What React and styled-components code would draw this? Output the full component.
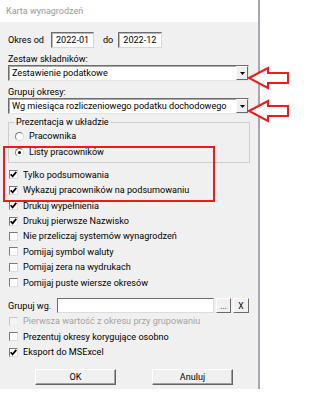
import React from "react";
import styled, { createGlobalStyle } from "styled-components";

const GlobalStyle = createGlobalStyle`
  html, body {
    margin: 0;
    padding: 0;
    background: #ffffff;
  }
  body {
    font-family: Roboto, "Noto Sans", sans-serif;
    font-size: 9.1px;
    color: #000;
  }
`;

const checks = [
  { label: "Tylko podsumowania", checked: true },
  { label: "Wykazuj pracowników na podsumowaniu", checked: true },
  { label: "Drukuj wypełnienia", checked: true },
  { label: "Drukuj pierwsze Nazwisko", checked: true },
  { label: "Nie przeliczaj systemów wynagrodzeń", checked: false },
  { label: "Pomijaj symbol waluty", checked: false },
  { label: "Pomijaj zera na wydrukach", checked: false },
  { label: "Pomijaj puste wiersze okresów", checked: false },
];

const lastChecks = [
  { label: "Pierwsza wartość z okresu przy grupowaniu", checked: false, disabled: true },
  { label: "Prezentuj okresy korygujące osobno", checked: false },
  { label: "Eksport do MSExcel", checked: true },
];

function Check({ label, checked, disabled }) {
  return (
    <CheckRow $disabled={disabled}>
      <CheckBox $disabled={disabled}>
        {checked && (
          <svg width="7" height="7" viewBox="0 0 7 7">
            <path d="M0.6 3.2 L2.6 5.4 L6.3 0.9" fill="none" stroke="#000" strokeWidth="1.7" />
          </svg>
        )}
      </CheckBox>
      <span>{label}</span>
    </CheckRow>
  );
}

function Combo({ value }) {
  return (
    <ComboBox>
      <ComboText>{value}</ComboText>
      <DropButton>
        <svg width="5" height="3" viewBox="0 0 5 3">
          <path d="M0 0 H5 L2.5 3 Z" fill="#000" />
        </svg>
      </DropButton>
    </ComboBox>
  );
}

function Arrow({ top }) {
  return (
    <ArrowSvg style={{ top }} width="46" height="26" viewBox="0 0 46 26">
      <path
        d="M2 12 L21 2 L21 7 L41 7 L41 17 L21 17 L21 22 Z"
        fill="#ffffff"
        stroke="#ee1c1c"
        strokeWidth="2"
        strokeLinejoin="miter"
      />
    </ArrowSvg>
  );
}

export default function App() {
  return (
    <Page>
      <GlobalStyle />
      <Dialog>
        <TitleBar>Karta wynagrodzeń</TitleBar>
        <Body>
          <PeriodRow>
            <PeriodLabel $after={7}>Okres od</PeriodLabel>
            <TextField $width={43} $after={9}>2022-01</TextField>
            <PeriodLabel $after={5}>do</PeriodLabel>
            <TextField $width={44}>2022-12</TextField>
          </PeriodRow>

          <FieldLabel $top={6}>Zestaw składników:</FieldLabel>
          <Combo value="Zestawienie podatkowe" />

          <FieldLabel $top={6}>Grupuj okresy:</FieldLabel>
          <Combo value="Wg miesiąca rozliczeniowego podatku dochodowego" />

          <GroupBox>
            <Legend>Prezentacja w układzie</Legend>
            <RadioRow>
              <Radio />
              <span>Pracownika</span>
            </RadioRow>
            <RadioRow>
              <Radio $selected />
              <span>Listy pracowników</span>
            </RadioRow>
          </GroupBox>

          <CheckList>
            {checks.map((c) => (
              <Check key={c.label} {...c} />
            ))}
          </CheckList>

          <SearchRow>
            <span>Grupuj wg.</span>
            <SearchField />
            <SmallButton $width={15}>...</SmallButton>
            <SmallButton $width={16}>X</SmallButton>
          </SearchRow>

          <CheckList $top={0}>
            {lastChecks.map((c) => (
              <Check key={c.label} {...c} />
            ))}
          </CheckList>

          <ButtonRow>
            <DialogButton>OK</DialogButton>
            <DialogButton>Anuluj</DialogButton>
          </ButtonRow>
        </Body>
      </Dialog>

      <RedFrame />
      <Arrow top={66} />
      <Arrow top={99} />
    </Page>
  );
}

const Page = styled.div`
  position: relative;
  width: 325px;
  height: 401px;
  overflow: hidden;
  background: #ffffff;
`;

const Dialog = styled.div`
  width: 258px;
  height: 389px;
  border-right: 2px solid #aca4b6;
  display: flex;
  flex-direction: column;
  background: #f0f0f0;
`;

const TitleBar = styled.div`
  height: 22px;
  flex: none;
  display: flex;
  align-items: center;
  padding-left: 6px;
  background: #ffffff;
  color: #9a9a9a;
  font-size: 9px;
`;

const Body = styled.div`
  flex: 1;
  display: flex;
  flex-direction: column;
  padding: 10px 9px 0 8px;
`;

const PeriodRow = styled.div`
  display: flex;
  align-items: center;
  height: 16px;
`;

const PeriodLabel = styled.span`
  margin-right: ${(p) => p.$after}px;
`;

const TextField = styled.div`
  box-sizing: border-box;
  width: ${(p) => p.$width}px;
  margin-right: ${(p) => p.$after || 0}px;
  height: 16px;
  padding-left: 4px;
  display: flex;
  align-items: center;
  background: #ffffff;
  border: 1px solid;
  border-color: #6d6d6d #d8d8d8 #d8d8d8 #6d6d6d;
  box-shadow: inset 1px 1px 0 #b9b9b9;
`;

const FieldLabel = styled.div`
  height: 11px;
  line-height: 11px;
  margin-top: ${(p) => p.$top}px;
`;

const ComboBox = styled.div`
  box-sizing: border-box;
  height: 16px;
  display: flex;
  align-items: stretch;
  background: #ffffff;
  border: 1px solid;
  border-color: #6d6d6d #e4e4e4 #e4e4e4 #6d6d6d;
  box-shadow: inset 1px 1px 0 #a8a8a8;
`;

const ComboText = styled.div`
  flex: 1;
  display: flex;
  align-items: center;
  padding-left: 3px;
  white-space: nowrap;
  overflow: hidden;
`;

const DropButton = styled.div`
  box-sizing: border-box;
  width: 12px;
  display: flex;
  align-items: center;
  justify-content: center;
  background: #efefef;
  border: 1px solid;
  border-color: #fbfbfb #6a6a6a #6a6a6a #fbfbfb;
`;

const GroupBox = styled.div`
  position: relative;
  margin-top: 8px;
  margin-right: -1px;
  padding: 5px 0 2px 6px;
  border: 1px solid #cfcfcf;
`;

const Legend = styled.span`
  position: absolute;
  top: -7px;
  left: 5px;
  padding: 0 2px;
  line-height: 12px;
  background: #f0f0f0;
`;

const RadioRow = styled.div`
  display: flex;
  align-items: center;
  gap: 5px;
  height: 16px;
`;

const Radio = styled.span`
  position: relative;
  box-sizing: border-box;
  width: 9px;
  height: 9px;
  border-radius: 50%;
  background: #ffffff;
  border: 1px solid;
  border-color: #7c7c7c #dadada #dadada #7c7c7c;

  &::after {
    content: "";
    display: ${(p) => (p.$selected ? "block" : "none")};
    position: absolute;
    left: 2px;
    top: 2px;
    width: 3px;
    height: 3px;
    border-radius: 50%;
    background: #000;
  }
`;

const CheckList = styled.div`
  display: flex;
  flex-direction: column;
  margin-top: ${(p) => (p.$top === undefined ? 4 : p.$top)}px;
`;

const CheckRow = styled.div`
  display: flex;
  align-items: center;
  gap: 5px;
  height: 15.45px;
  padding-left: 1px;
  white-space: nowrap;
  color: ${(p) => (p.$disabled ? "#a3a3a3" : "#000")};
`;

const CheckBox = styled.span`
  box-sizing: border-box;
  width: 9px;
  height: 9px;
  display: flex;
  align-items: center;
  justify-content: center;
  background: ${(p) => (p.$disabled ? "#f4f4f4" : "#ffffff")};
  border: 1px solid;
  border-color: ${(p) =>
    p.$disabled ? "#c4c4c4 #eeeeee #eeeeee #c4c4c4" : "#7a7a7a #dedede #dedede #7a7a7a"};
`;

const SearchRow = styled.div`
  display: flex;
  align-items: center;
  height: 16px;
  margin-top: 7px;
  gap: 2px;

  span {
    margin-right: 4px;
  }
`;

const SearchField = styled.div`
  box-sizing: border-box;
  flex: 1;
  height: 15px;
  background: #ffffff;
  border: 1px solid;
  border-color: #6d6d6d #dcdcdc #dcdcdc #6d6d6d;
`;

const SmallButton = styled.div`
  box-sizing: border-box;
  width: ${(p) => p.$width}px;
  height: 15px;
  display: flex;
  align-items: center;
  justify-content: center;
  font-size: 8.5px;
  background: #f0f0f0;
  border: 1px solid;
  border-color: #ffffff #6a6a6a #6a6a6a #ffffff;
`;

const ButtonRow = styled.div`
  display: flex;
  gap: 36px;
  margin-top: 9px;
  padding-left: 27px;
`;

const DialogButton = styled.div`
  box-sizing: border-box;
  width: 81px;
  height: 16px;
  display: flex;
  align-items: center;
  justify-content: center;
  background: #f0f0f0;
  border: 1px solid;
  border-color: #ffffff #646464 #646464 #ffffff;
  box-shadow: inset -1px -1px 0 #a0a0a0;
`;

const RedFrame = styled.div`
  position: absolute;
  left: 3px;
  top: 146px;
  width: 208px;
  height: 52px;
  border: 2px solid #ea1c1c;
`;

const ArrowSvg = styled.svg`
  position: absolute;
  left: 247px;
`;
